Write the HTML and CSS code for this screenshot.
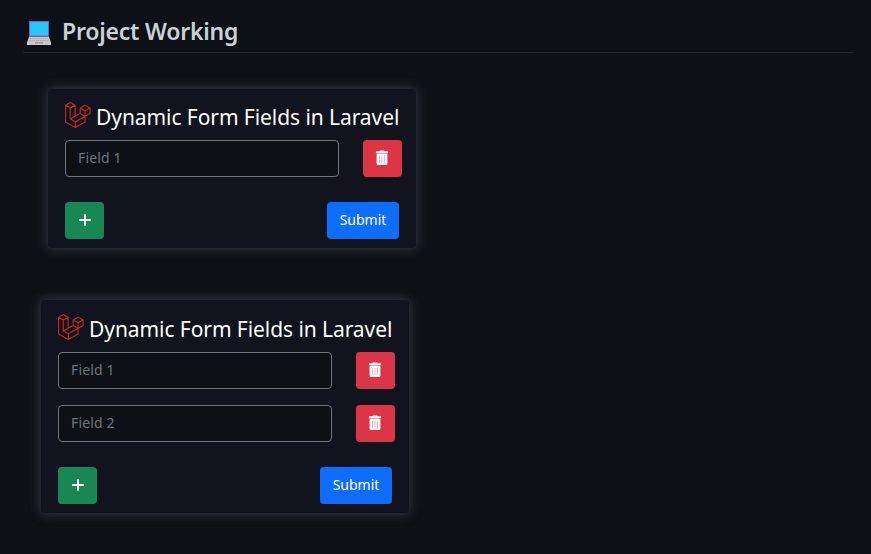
FILE: index.html
```
<!DOCTYPE html>
<html lang="en">
<head>
<meta charset="utf-8">
<title>Project Working</title>
<link rel="stylesheet" href="styles.css">
</head>
<body>
<svg class="defs" aria-hidden="true">
  <symbol id="laravel" viewBox="0 0 26 26"><path d="M.6 3.2 5.3.6l4.8 2.6-4.8 2.7zM.6 3.2v16.7l9.7 5.5 9.8-5.5v-5.4M5.3 5.9v11l5 2.8v5.7M10.1 3.2v11l-4.8 2.7M10.1 14.2l5.1-2.8M10.3 19.7l9.8-5.2 5-3V6l-5-2.7-4.9 2.7v5.4l4.9 3.1V8.8M15.2 6l4.9 2.8 5-2.8"/></symbol>
  <symbol id="trash" viewBox="0 0 14 16"><path fill="#fff" d="M4.5 1.2Q4.7.5 5.5.5h3q.8 0 1 .7h2.8q.8 0 .8.7v1H.9v-1q0-.7.8-.7zM1.6 3.5h10.8v10.2q0 1.3-1.3 1.3H2.9q-1.3 0-1.3-1.3z"/><path stroke="#eda0a9" stroke-width=".8" d="M4.5 6v7M7 6v7M9.5 6v7"/></symbol>
  <symbol id="plus" viewBox="0 0 14 14"><path stroke="#fff" stroke-width="2" stroke-linecap="round" d="M7 2v10M2 7h10"/></symbol>
</svg>
<main>
  <h1>
    <svg class="laptop" viewBox="0 0 24 24"><path fill="#7860a8" d="M2 0h20v16H2z"/><path fill="#29c5ff" d="M3 1h18v13.500H3z"/><path fill="#c9c9c9" d="M2 16h20l2 5.500V24H0v-2.500z"/><path stroke="#a2a2a2" stroke-width=".8" stroke-dasharray="1.500 .7" d="M2.500 17.500h19M2 19.500h20"/><path fill="#999" d="M8 21h8v1.500H8z"/></svg>
    <span>Project Working</span>
  </h1>
  <section class="card first">
    <h2><svg class="logo"><use href="#laravel"/></svg><span>Dynamic Form Fields in Laravel</span></h2>
    <div class="row"><input placeholder="Field 1" aria-label="Field 1"><button class="btn danger" aria-label="Delete"><svg class="bin"><use href="#trash"/></svg></button></div>
    <div class="actions"><button class="btn success" aria-label="Add"><svg class="add"><use href="#plus"/></svg></button><button class="btn primary">Submit</button></div>
  </section>
  <section class="card second">
    <h2><svg class="logo"><use href="#laravel"/></svg><span>Dynamic Form Fields in Laravel</span></h2>
    <div class="row"><input placeholder="Field 1" aria-label="Field 1"><button class="btn danger" aria-label="Delete"><svg class="bin"><use href="#trash"/></svg></button></div>
    <div class="row"><input placeholder="Field 2" aria-label="Field 2"><button class="btn danger" aria-label="Delete"><svg class="bin"><use href="#trash"/></svg></button></div>
    <div class="actions"><button class="btn success" aria-label="Add"><svg class="add"><use href="#plus"/></svg></button><button class="btn primary">Submit</button></div>
  </section>
</main>
</body>
</html>
```
FILE: styles.css
```
* { box-sizing: border-box; }
body { margin: 0; height: 554px; overflow: hidden; background: #0d1117; font-family: "Noto Sans", sans-serif; }
.defs { display: none; }
main { display: flow-root; padding: 0 18px 0 23px; }
h1 { display: flex; height: 53px; margin: 0; padding: 14px 0 0 4px; border-bottom: 1px solid #21262d; color: #c9d1d9; font-size: 23px; font-weight: 600; letter-spacing: -0.22px; line-height: 34px; white-space: nowrap; }
.laptop { width: 24px; height: 24px; margin: 7px 11px 0 0; }
.card { width: 368px; padding: 13px 14px 9px 17px; border-radius: 4px; background: #11131e; box-shadow: 0 0 10px 2px #303240; }
.first { margin: 36px 0 0 25px; }
.second { margin: 52px 0 0 18px; padding-top: 14px; }
h2 { display: flex; height: 38px; margin: 0; color: #fff; font-size: 21px; font-weight: 400; letter-spacing: -0.07px; line-height: 30px; white-space: nowrap; }
.logo { width: 26px; height: 26px; margin-right: 5px; fill: none; stroke: #c9261f; stroke-width: 1.1; stroke-linejoin: round; }
.row { display: flex; justify-content: space-between; margin-bottom: 16px; }
input { width: 274px; height: 37px; padding: 0 12px 2px; border: 1px solid #6c757d; border-radius: 4px; background: #0d1117; font: 14px "Noto Sans", sans-serif; letter-spacing: 0.15px; }
input::placeholder { color: #6c757d; opacity: 1; }
.btn { display: flex; width: 39px; height: 37px; padding: 0 0 2px; align-items: center; justify-content: center; border: 0; border-radius: 4px; color: #fff; font: 14px "Noto Sans", sans-serif; }
.danger { padding-right: 1px; background: #dc3545; }
.success { background: #198754; }
.primary { width: 72px; background: #0d6efd; }
.bin { width: 14px; height: 16px; }
.add { width: 14px; height: 14px; }
.actions { display: flex; justify-content: space-between; padding: 9px 3px 0 0; }
```
